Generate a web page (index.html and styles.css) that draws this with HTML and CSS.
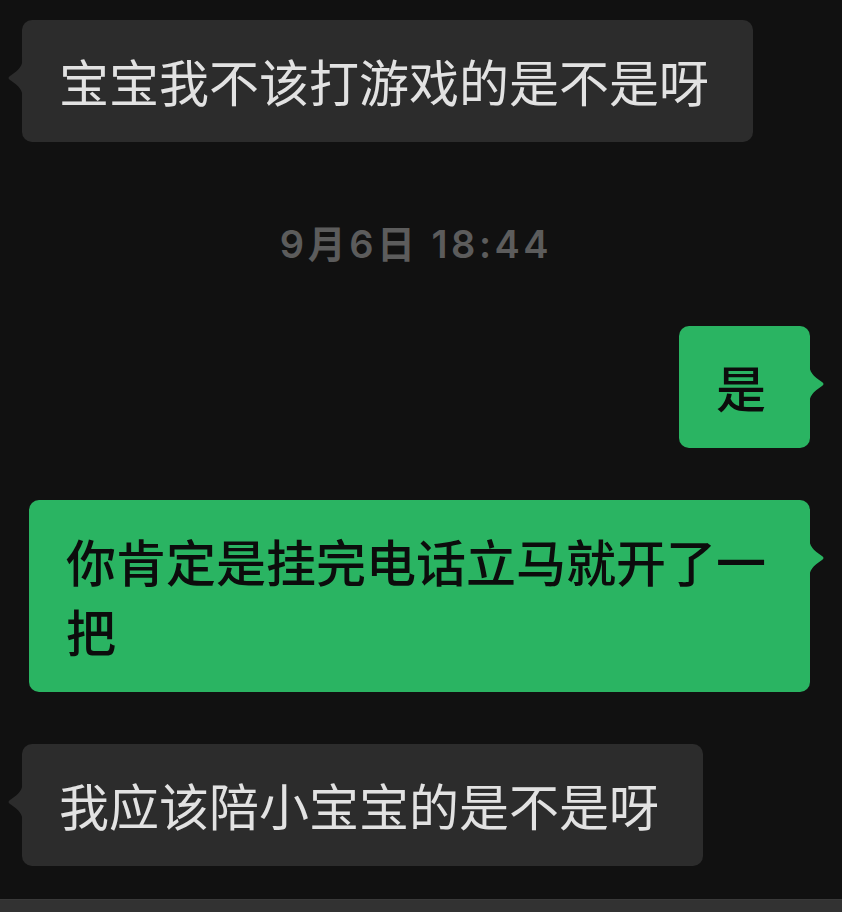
FILE: index.html
```html
<!DOCTYPE html>
<html>
<head>
    <meta name="viewport" content="width=device-width, initial-scale=1.0">
    <link rel="stylesheet" href="styles.css">
</head>
<body>
    <div class="chat">
        <div class="row left first">
            <div class="bubble other">宝宝我不该打游戏的是不是呀</div>
        </div>

        <div class="time">9月6日 18:44</div>

        <div class="row right">
            <div class="bubble me">是</div>
        </div>

        <div class="row right">
            <div class="bubble me">你肯定是挂完电话立马就开了一把</div>
        </div>

        <div class="row left">
            <div class="bubble other">我应该陪小宝宝的是不是呀</div>
        </div>
    </div>

    <!-- input bar, only its top edge is visible -->
    <div class="input-bar"></div>
</body>
</html>
```

FILE: styles.css
```css
/* Basic page setup */
body {
    margin: 0;
    height: 912px;
    overflow: hidden;
    background: #111111;
    font-family: "Noto Sans CJK SC", "Noto Sans", sans-serif;
}

/* Message list */
.chat {
    display: flex;
    flex-direction: column;
    padding: 0 32px 0 22px;
}

.row {
    display: flex;
    margin-top: 52px;
}

.row.first {
    margin-top: 20px;
}

.row.left {
    justify-content: flex-start;
}

.row.right {
    justify-content: flex-end;
}

/* Bubbles */
.bubble {
    position: relative;
    box-sizing: border-box;
    max-width: 781px;
    padding: 25px 44px 27px 37px;
    border-radius: 10px;
    font-size: 50px;
    line-height: 70px;
}

.bubble::before {
    content: "";
    position: absolute;
    top: 36px;
    width: 16px;
    height: 44px;
    background: inherit;
}

.other {
    background: #2c2c2c;
    color: #e2e2e2;
}

.other::before {
    left: -15px;
    clip-path: path("M16 0 C16 10 12 14 3 20 Q0 22 3 24 C12 30 16 34 16 44 Z");
}

.me {
    background: #2ab462;
    color: #0c0c0c;
    font-weight: 500;
}

.me::before {
    right: -15px;
    clip-path: path("M0 0 C0 10 4 14 13 20 Q16 22 13 24 C4 30 0 34 0 44 Z");
}

/* Timestamp */
.time {
    margin: 76px 0 4px;
    text-align: center;
    color: #5c5c5c;
    font-family: "Inter", "Noto Sans CJK SC", sans-serif;
    font-size: 38px;
    font-weight: 600;
    letter-spacing: 3.5px;
    line-height: 52px;
}

/* Bottom input bar */
.input-bar {
    margin-top: 33px;
    height: 20px;
    background: #323232;
    border-top: 1px solid #3a3a3a;
}
```
